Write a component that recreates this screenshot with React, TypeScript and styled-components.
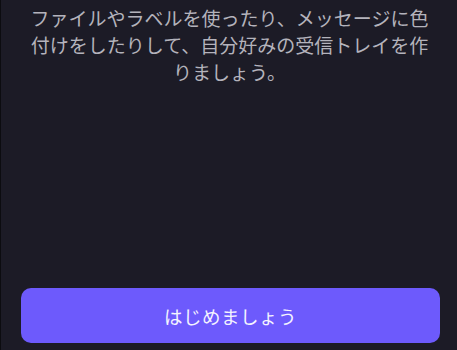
import React from "react";
import styled, { createGlobalStyle } from "styled-components";

const Global = createGlobalStyle`
  html, body { margin: 0; padding: 0; background: #1c1b26; }
  body { font-family: "Noto Sans CJK JP", "Noto Sans", sans-serif; }
`;

const Screen = styled.div`
  height: 350px;
  box-sizing: border-box;
  display: flex;
  flex-direction: column;
  background: #1c1b26;
  border-left: 1px solid #0c0c10;
  overflow: hidden;
`;

const Description = styled.p`
  margin: 0;
  padding: 4px 26px 0 27px;
  font-family: "Noto Sans CJK JP", sans-serif;
  font-size: 19px;
  line-height: 27px;
  letter-spacing: 0;
  color: #b4b3bc;
  text-align: center;
`;

const Spacer = styled.div`
  flex: 1;
`;

const Footer = styled.div`
  padding: 0 17px 7px 20px;
`;

const PrimaryButton = styled.button`
  width: 100%;
  height: 55px;
  border: none;
  border-radius: 10px;
  background: #6d5afc;
  color: #f4f3ff;
  font-family: "Noto Sans CJK JP", "Noto Sans", sans-serif;
  font-size: 18.5px;
  letter-spacing: 0.5px;
  display: flex;
  align-items: center;
  justify-content: center;
  cursor: pointer;
`;

export default function App() {
  return (
    <>
      <Global />
      <Screen>
        <Description>
          ファイルやラベルを使ったり、メッセージに色付けをしたりして、自分好みの受信トレイを作りましょう。
        </Description>
        <Spacer />
        <Footer>
          <PrimaryButton>はじめましょう</PrimaryButton>
        </Footer>
      </Screen>
    </>
  );
}
